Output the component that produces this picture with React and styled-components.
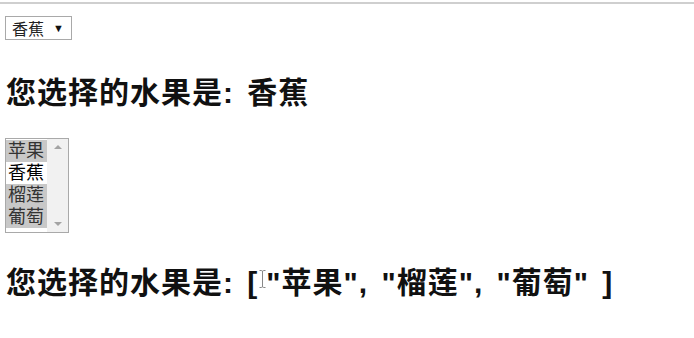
import React from 'react';
import styled, { createGlobalStyle } from 'styled-components';

const GlobalStyle = createGlobalStyle`
  html, body {
    margin: 0;
    padding: 0;
    background: #ffffff;
  }
  body {
    font-family: "Liberation Sans", "Noto Sans CJK SC", sans-serif;
    color: #111;
  }
`;

const Page = styled.div`
  border-top: 2px solid #cfcfcf;
  margin-top: 2px;
  padding: 12px 0 0 5px;
  display: flex;
  flex-direction: column;
  align-items: flex-start;
`;

const Dropdown = styled.div`
  width: 67px;
  height: 24px;
  box-sizing: border-box;
  border: 1px solid #a9a9a9;
  background: #fff;
  display: flex;
  align-items: center;
  justify-content: space-between;
  padding: 0 7px 0 6px;
  font-size: 16px;
  color: #222;
`;

const Caret = styled.span`
  font-size: 11px;
  color: #111;
`;

const Heading = styled.h2`
  margin: ${(p) => p.$top}px 0 0 1px;
  font-size: 30px;
  line-height: 38px;
  font-weight: bold;
  color: #111;
  letter-spacing: 1px;
  word-spacing: 4px;
`;

const ListBox = styled.div`
  margin-top: 26px;
  width: 64px;
  height: 95px;
  box-sizing: border-box;
  border: 1px solid #a9a9a9;
  display: flex;
  background: #fff;
`;

const Options = styled.div`
  flex: 1;
  padding-top: 1px;
  display: flex;
  flex-direction: column;
`;

const Option = styled.div`
  height: 22px;
  line-height: 22px;
  padding-left: 2px;
  font-size: 18px;
  color: ${(p) => (p.$selected ? '#333' : '#000')};
  background: ${(p) => (p.$selected ? '#c8c8c8' : '#fff')};
`;

const Scrollbar = styled.div`
  width: 21px;
  background: #f1f1f1;
  display: flex;
  flex-direction: column;
  justify-content: space-between;
  align-items: center;
  padding: 6px 0;
  box-sizing: border-box;
`;

const Arrow = styled.div`
  width: 0;
  height: 0;
  border-left: 4px solid transparent;
  border-right: 4px solid transparent;
  ${(p) => (p.$up ? 'border-bottom: 4px solid #a3a3a3;' : 'border-top: 4px solid #a3a3a3;')}
`;

const Cursor = styled.span`
  display: inline-block;
  width: 7px;
  height: 18px;
  margin: 0 0 0 1px;
  vertical-align: 5px;
`;

function IBeam() {
  return (
    <Cursor>
      <svg width="7" height="18" viewBox="0 0 7 18">
        <path d="M0.5 0.5 H2.5 Q3.5 0.5 3.5 2 V16 Q3.5 17.5 2.5 17.5 H0.5 M6.5 0.5 H4.5 Q3.5 0.5 3.5 2 M6.5 17.5 H4.5 Q3.5 17.5 3.5 16" fill="none" stroke="#888" strokeWidth="1" />
      </svg>
    </Cursor>
  );
}

const fruits = [
  { name: '苹果', selected: true },
  { name: '香蕉', selected: false },
  { name: '榴莲', selected: true },
  { name: '葡萄', selected: true },
];

export default function App() {
  return (
    <>
      <GlobalStyle />
      <Page>
        <Dropdown>
          <span>香蕉</span>
          <Caret>▼</Caret>
        </Dropdown>
        <Heading $top={34}>您选择的水果是: 香蕉</Heading>
        <ListBox>
          <Options>
            {fruits.map((f) => (
              <Option key={f.name} $selected={f.selected}>{f.name}</Option>
            ))}
          </Options>
          <Scrollbar>
            <Arrow $up />
            <Arrow />
          </Scrollbar>
        </ListBox>
        <Heading $top={26}>
          您选择的水果是: [<IBeam />"苹果", "榴莲", "葡萄" ]
        </Heading>
      </Page>
    </>
  );
}
